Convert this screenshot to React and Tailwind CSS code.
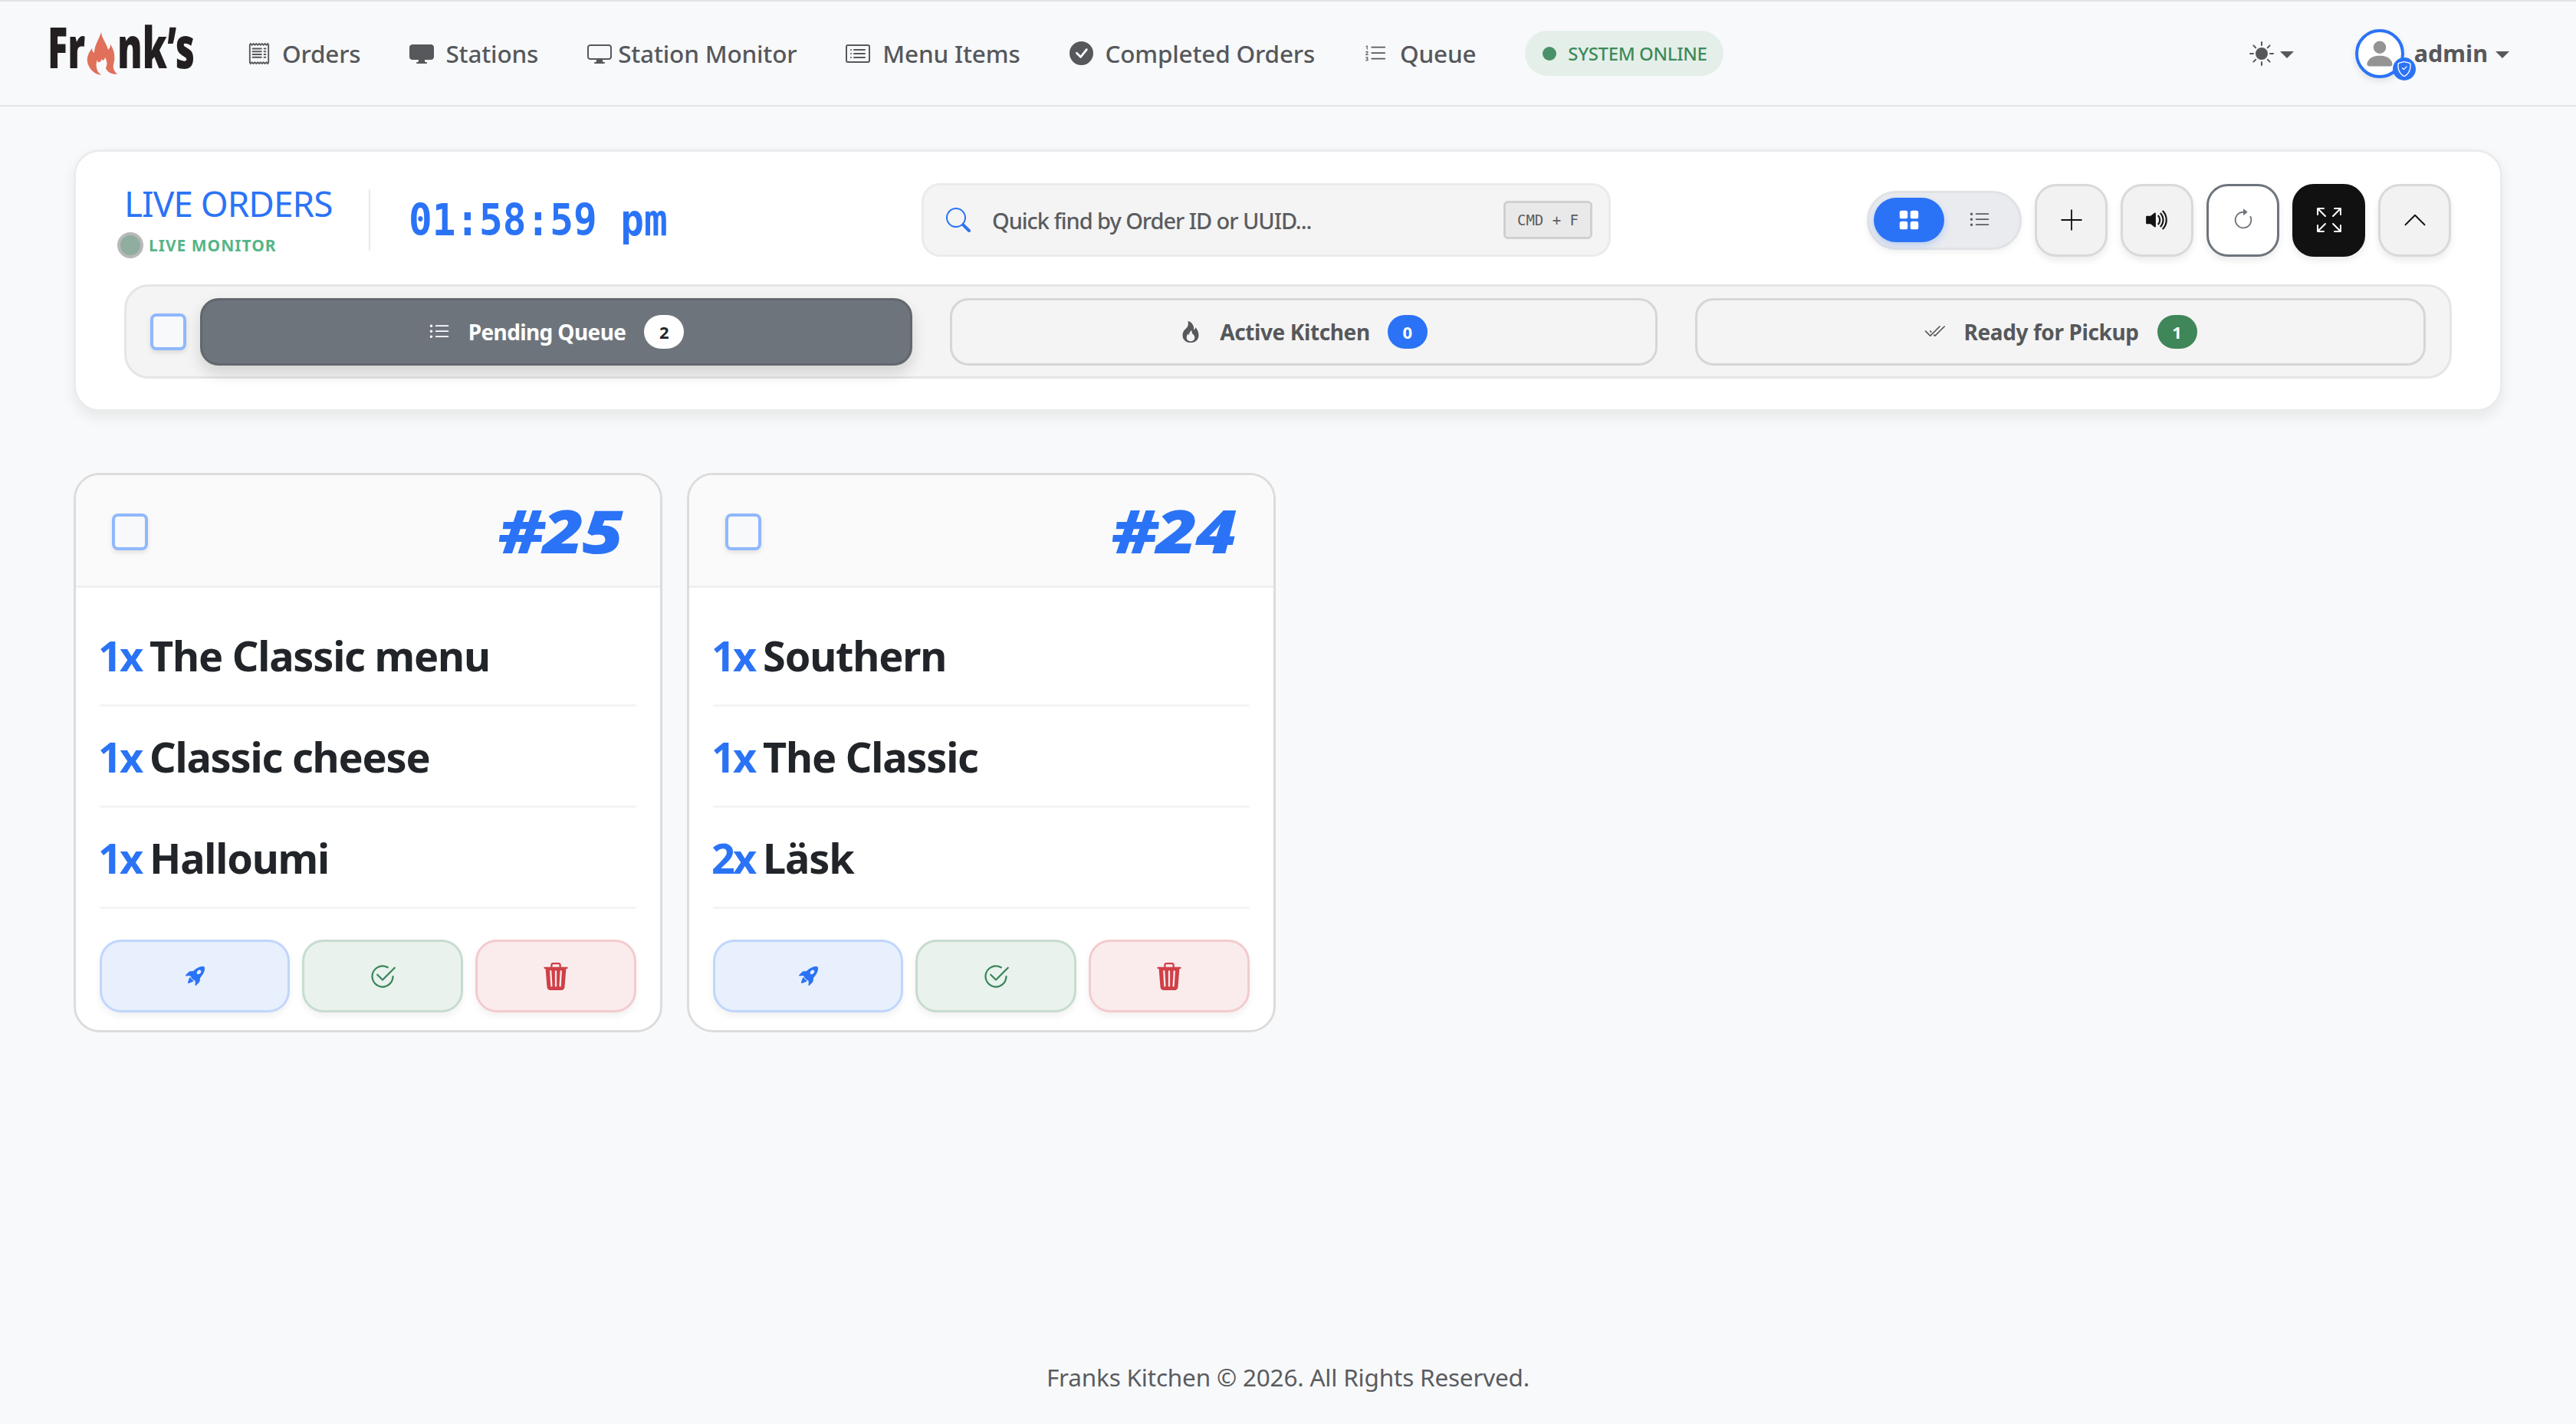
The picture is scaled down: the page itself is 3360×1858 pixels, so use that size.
import React from "react";
import { Plus, ChevronUp } from "lucide-react";
import {
  BsReceipt, BsDisplayFill, BsDisplay, BsCardList, BsCheckCircleFill, BsListOl, BsSunFill, BsPersonFill,
  BsShieldCheck, BsSearch, BsListUl, BsGridFill, BsVolumeUpFill, BsArrowClockwise, BsArrowsFullscreen,
  BsFire, BsCheck2All, BsRocketTakeoffFill, BsCheck2Circle, BsTrash3Fill,
} from "react-icons/bs";

const NavItem = ({ icon: Icon, label, size = 30, gap = "gap-[15px]" }) => (
  <a className={`flex items-center ${gap} text-[#56585b] text-[31.5px] font-medium tracking-[-0.2px]`}>
    <Icon size={size} className="shrink-0" />
    <span className="leading-none">{label}</span>
  </a>
);

const Caret = () => (
  <span className="inline-block w-0 h-0 border-x-[9px] border-x-transparent border-t-[9px] border-t-[#56585b]" />
);

const Flame = () => (
  <svg viewBox="0 0 40 56" className="w-[40px] h-[56px] shrink-0">
    <path
      fillRule="evenodd"
      fill="#e0705a"
      d="M19 0C20 9 26 14 28 23C30 21 31 19 31 16C36 23 38 33 35 42C34 47 36 51 40 55C32 55 27 52 25 47C27 42 27 38 24 33C23 37 21 38 20 35C18 40 14 41 14 36C12 41 12 46 15 52C17 54 18 55 19 56C10 55 3 48 1 39C0 32 3 26 7 21C7 24 8 26 10 27C10 17 16 10 19 0Z"
    />
  </svg>
);

const Logo = () => (
  <div className="flex items-center w-[190px] h-[56px] text-[#231f20] font-black text-[74px] leading-none">
    <span className="w-[51px] origin-left scale-x-[0.66] -translate-y-[9px] whitespace-nowrap">Fr</span>
    <Flame />
    <span className="w-[99px] origin-left scale-x-[0.66] -translate-y-[9px] whitespace-nowrap">nk’s</span>
  </div>
);

const IconButton = ({ children, className }) => (
  <button className={`w-[95px] h-[95px] rounded-[28px] flex items-center justify-center border-[3px] shadow-[0_5px_10px_rgba(0,0,0,0.08)] ${className}`}>
    {children}
  </button>
);

const Checkbox = ({ className = "" }) => (
  <span className={`block w-[47px] h-[48px] shrink-0 rounded-[8px] border-[4px] border-[#8fb8fd] bg-[#f8f9fa] shadow-[0_3px_6px_rgba(0,0,0,0.1)] ${className}`} />
);

const Badge = ({ children, className }) => (
  <span className={`w-[52px] h-[44px] rounded-full flex items-center justify-center text-[22px] font-bold leading-none ${className}`}>
    {children}
  </span>
);

const OrderRow = ({ qty, name }) => (
  <div className="h-[132px] flex items-center border-b-[3px] border-[#f3f4f5] text-[54px] font-bold tracking-[-1.2px] leading-none whitespace-nowrap">
    <span className="text-[#2b73f6] -ml-[2px] tracking-[-3px]">{qty}</span>
    <span className="ml-[11px] text-[#212529]">{name}</span>
  </div>
);

const OrderCard = ({ id, items }) => (
  <div className="w-[768px] h-[730px] rounded-[34px] border-[3px] border-[#dcdcdc] bg-white overflow-hidden flex flex-col">
    <div className="h-[147px] shrink-0 bg-[#fafafa] border-b-[3px] border-[#f0f0f0] flex items-center justify-between pl-[47px] pr-[50px]">
      <Checkbox className="mt-[3px]" />
      <span className="text-[#2b73f6] text-[78px] font-black italic leading-none tracking-[-2px] origin-right scale-x-[1.19]">{id}</span>
    </div>
    <div className="px-[31px] pt-[23px]">
      {items.map((it) => (
        <OrderRow key={it[1]} qty={it[0]} name={it[1]} />
      ))}
    </div>
    <div className="px-[31px] mt-[40px] flex gap-[16px]">
      <button className="w-[248px] h-[95px] rounded-[28px] border-[3px] border-[#c0d6fc] bg-[#e8effd] flex items-center justify-center shadow-[0_5px_10px_rgba(0,0,0,0.06)] text-[#2b73f6]">
        <BsRocketTakeoffFill size={25} />
      </button>
      <button className="w-[210px] h-[95px] rounded-[28px] border-[3px] border-[#c6dccf] bg-[#e9f2ed] flex items-center justify-center shadow-[0_5px_10px_rgba(0,0,0,0.06)] text-[#3a8559]">
        <BsCheck2Circle size={36} />
      </button>
      <button className="w-[210px] h-[95px] rounded-[28px] border-[3px] border-[#f3cbce] bg-[#faeced] flex items-center justify-center shadow-[0_5px_10px_rgba(0,0,0,0.06)] text-[#cf4048]">
        <BsTrash3Fill size={36} />
      </button>
    </div>
  </div>
);

export default function App() {
  return (
    <div className="min-h-[1858px] h-[1858px] flex flex-col bg-[#f8f9fb] font-['Noto_Sans',sans-serif]">
      <nav className="h-[139px] shrink-0 border-t-[2px] border-b-[2px] border-[#e2e4e2] flex items-center pl-[62px] pr-[87px]">
        <Logo />
        <div className="ml-[71px] flex items-center gap-[64px]">
          <NavItem icon={BsReceipt} label="Orders" size={30} />
          <NavItem icon={BsDisplayFill} label="Stations" size={32} gap="gap-[15px]" />
          <NavItem icon={BsDisplay} label="Station Monitor" size={32} gap="gap-[8px]" />
          <NavItem icon={BsCardList} label="Menu Items" size={32} gap="gap-[16px]" />
          <NavItem icon={BsCheckCircleFill} label="Completed Orders" size={31} gap="gap-[16px]" />
          <NavItem icon={BsListOl} label="Queue" size={30} gap="gap-[17px]" />
          <span className="h-[59px] w-[259px] rounded-full bg-[#e5efe9] flex items-center pl-[23px] gap-[15px] text-[#3d8b5c] text-[24px] font-medium whitespace-nowrap tracking-[-0.4px]">
            <span className="w-[18px] h-[18px] rounded-full bg-[#4a9168]" />
            SYSTEM ONLINE
          </span>
        </div>
        <div className="ml-auto flex items-center">
          <BsSunFill size={32} className="text-[#56585b]" />
          <span className="ml-[8px]"><Caret /></span>
          <div className="ml-[80px] relative w-[64px] h-[64px] rounded-full border-[4px] border-[#2b73f6] bg-white shadow-[0_4px_8px_rgba(0,0,0,0.1)] flex items-center justify-center">
            <BsPersonFill size={44} className="text-[#949494]" />
            <span className="absolute -right-[19px] -bottom-[7px] w-[30px] h-[30px] rounded-full bg-[#2b73f6] flex items-center justify-center text-white">
              <BsShieldCheck size={20} />
            </span>
          </div>
          <span className="ml-[13px] text-[#56585b] text-[30.5px] font-bold leading-none">admin</span>
          <span className="ml-[10px]"><Caret /></span>
        </div>
      </nav>

      <main className="flex-1 px-[96px] pt-[56px]">
        <section className="h-[342px] rounded-[34px] border-[3px] border-[#ececec] bg-white shadow-[0_8px_18px_rgba(0,0,0,0.07)] px-[63px] pt-[41px]">
          <div className="h-[96px] flex items-center">
            <div className="w-[1040px] flex items-center shrink-0">
              <div className="w-[321px] h-[80px] border-r-[2px] border-[#e8e8e8] flex flex-col justify-center pt-[5px]">
                <h1 className="text-[#2b73f6] text-[46px] leading-[46px] tracking-[-1px] whitespace-nowrap">LIVE ORDERS</h1>
                <div className="-ml-[9px] mt-[15px] flex items-center gap-[7px]">
                  <span className="w-[34px] h-[34px] rounded-full bg-[#8fae9f] border-[4px] border-[#b8b8b8]" />
                  <span className="text-[#55b588] text-[21px] font-bold tracking-[1px] leading-none whitespace-nowrap">LIVE MONITOR</span>
                </div>
              </div>
              <time className="ml-[50px] text-[#2b73f6] text-[51px] font-bold font-['DejaVu_Sans_Mono',monospace] leading-none whitespace-nowrap scale-y-[1.12]">01:58:59 pm</time>
            </div>
            <div className="w-[899px] h-[96px] shrink-0 rounded-[24px] bg-[#f4f4f4] border-[3px] border-[#ebebeb] flex items-center pl-[29px] pr-[21px]">
              <BsSearch size={32} className="text-[#2b73f6]" />
              <span className="ml-[28px] text-[#5a5c5f] text-[29px] font-medium leading-none whitespace-nowrap tracking-[-1.05px]">Quick find by Order ID or UUID...</span>
              <kbd className="ml-auto w-[116px] h-[50px] rounded-[6px] bg-[#e9e9e9] border-[3px] border-[#d0d0d0] flex items-center justify-center text-[#5a5c5f] text-[19px] font-['DejaVu_Sans_Mono',monospace]">CMD + F</kbd>
            </div>
            <div className="ml-auto mr-[1px] flex items-center gap-[17px]">
              <div className="w-[202px] h-[77px] rounded-full bg-[#e9ebef] border-[3px] border-[#e0e2e6] shadow-[0_4px_8px_rgba(0,0,0,0.05)] flex items-center pl-[6px]">
                <span className="w-[92px] h-[58px] rounded-full bg-[#2b73f6] flex items-center justify-center text-white shadow-[0_4px_10px_rgba(43,115,246,0.25)]">
                  <BsGridFill size={28} />
                </span>
                <span className="w-[92px] flex items-center justify-center text-[#5a5c5f]">
                  <BsListUl size={28} />
                </span>
              </div>
              <IconButton className="bg-[#f2f2f2] border-[#d9d9d9] text-[#111]"><Plus size={44} strokeWidth={1} /></IconButton>
              <IconButton className="bg-[#f2f2f2] border-[#d9d9d9] text-[#111]"><BsVolumeUpFill size={34} /></IconButton>
              <IconButton className="bg-white border-[#6e747c] text-[#6e747c]"><BsArrowClockwise size={30} /></IconButton>
              <IconButton className="bg-[#111] border-[#111] text-white"><BsArrowsFullscreen size={32} /></IconButton>
              <IconButton className="bg-[#f2f2f2] border-[#d9d9d9] text-[#111]"><ChevronUp size={50} strokeWidth={0.9} /></IconButton>
            </div>
          </div>

          <div className="mt-[36px] h-[123px] rounded-[32px] bg-[#f4f4f4] border-[3px] border-[#e5e5e5] flex items-center pl-[31px]">
            <Checkbox />
            <button className="ml-[18px] w-[929px] h-[88px] rounded-[24px] bg-[#6e747c] border-[3px] border-[#62676e] shadow-[0_10px_20px_rgba(0,0,0,0.14)] text-white flex items-center justify-center">
              <BsListUl size={28} />
              <span className="ml-[24px] text-[28px] font-bold leading-none tracking-[-0.6px] whitespace-nowrap">Pending Queue</span>
              <Badge className="ml-[24px] bg-white text-[#212529]">2</Badge>
            </button>
            <button className="ml-[49px] w-[923px] h-[88px] rounded-[24px] border-[3px] border-[#d6d6d6] text-[#56585b] flex items-center justify-center">
              <BsFire size={28} />
              <span className="ml-[24px] text-[28px] font-bold leading-none tracking-[-0.4px] whitespace-nowrap">Active Kitchen</span>
              <Badge className="ml-[23px] bg-[#2b73f6] text-white">0</Badge>
            </button>
            <button className="ml-[49px] w-[953px] h-[88px] rounded-[24px] border-[3px] border-[#d6d6d6] text-[#56585b] flex items-center justify-center">
              <BsCheck2All size={28} />
              <span className="ml-[24px] text-[28px] font-bold leading-none tracking-[-0.4px] whitespace-nowrap">Ready for Pickup</span>
              <Badge className="ml-[24px] bg-[#3f8659] text-white">1</Badge>
            </button>
          </div>
        </section>

        <div className="mt-[80px] flex gap-[32px]">
          <OrderCard id="#25" items={[["1x", "The Classic menu"], ["1x", "Classic cheese"], ["1x", "Halloumi"]]} />
          <OrderCard id="#24" items={[["1x", "Southern"], ["1x", "The Classic"], ["2x", "Läsk"]]} />
        </div>
      </main>

      <footer className="h-[120px] shrink-0 flex justify-center pt-[39px] text-[#5a5c5f] text-[31.5px] leading-[40px] tracking-[-0.2px]">
        Franks Kitchen © 2026. All Rights Reserved.
      </footer>
    </div>
  );
}
